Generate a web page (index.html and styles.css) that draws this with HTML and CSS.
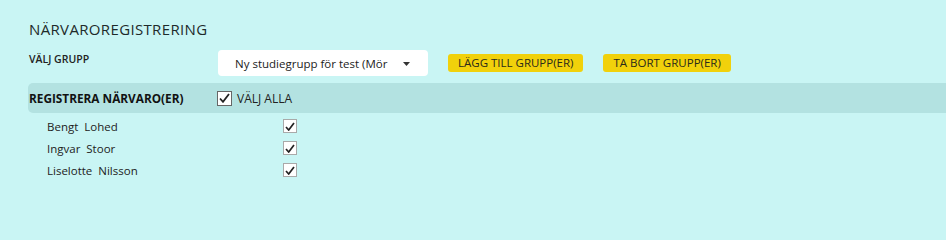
FILE: index.html
```html
<!DOCTYPE html>
<html lang="sv">
<head>
<meta charset="utf-8">
<title>Närvaroregistrering</title>
<link rel="stylesheet" href="styles.css">
</head>
<body>
<div class="page">
  <h1 class="title">NÄRVAROREGISTRERING</h1>
  <div class="group-row">
    <span class="group-label">VÄLJ GRUPP</span>
    <div class="select">
      <span class="select-text">Ny studiegrupp för test (Mör</span>
      <svg class="select-arrow" width="7" height="4" viewBox="0 0 7 4"><path d="M0 0H7L3.5 4Z" fill="#333"/></svg>
    </div>
    <button class="btn">LÄGG TILL GRUPP(ER)</button>
    <button class="btn">TA BORT GRUPP(ER)</button>
  </div>
  <div class="bar">
    <span class="bar-label">REGISTRERA NÄRVARO(ER)</span>
    <span class="check check-all"><svg width="11" height="10" viewBox="0 0 11 10"><path d="M1 5.5L4 8.8L10 1" fill="none" stroke="#222" stroke-width="1.8"/></svg></span>
    <span class="all-label">VÄLJ ALLA</span>
  </div>
  <ul class="list">
    <li class="row"><span class="name">Bengt&nbsp; Lohed</span><span class="check"><svg width="10" height="9" viewBox="0 0 10 9"><path d="M1 5L3.7 8L9 1" fill="none" stroke="#222" stroke-width="1.7"/></svg></span></li>
    <li class="row"><span class="name">Ingvar&nbsp; Stoor</span><span class="check"><svg width="10" height="9" viewBox="0 0 10 9"><path d="M1 5L3.7 8L9 1" fill="none" stroke="#222" stroke-width="1.7"/></svg></span></li>
    <li class="row"><span class="name">Liselotte&nbsp; Nilsson</span><span class="check"><svg width="10" height="9" viewBox="0 0 10 9"><path d="M1 5L3.7 8L9 1" fill="none" stroke="#222" stroke-width="1.7"/></svg></span></li>
  </ul>
</div>
</body>
</html>
```
FILE: styles.css
```css
html, body {
  margin: 0;
  padding: 0;
  background: #c9f5f4;
}
body {
  font-family: "Open Sans", "Noto Sans", sans-serif;
  color: #222;
  width: 946px;
  height: 223px;
  overflow: hidden;
}
.page {
  padding-top: 20px;
}
.title {
  margin: 0 0 0 29px;
  font-size: 15px;
  font-weight: 400;
  line-height: 19px;
  color: #1e2a2a;
  letter-spacing: 0.35px;
}
.group-row {
  display: flex;
  align-items: flex-start;
  margin: 12px 0 0 29px;
}
.group-label {
  width: 189px;
  font-size: 10.5px;
  font-weight: 600;
  line-height: 12px;
  margin-top: 2px;
  color: #222;
}
.select {
  box-sizing: border-box;
  width: 210px;
  height: 26px;
  background: #fff;
  border-radius: 4px;
  display: flex;
  align-items: center;
  padding-left: 17px;
  margin-top: -1px;
}
.select-text {
  font-size: 11.5px;
  color: #222;
  white-space: nowrap;
}
.select-arrow {
  margin-left: auto;
  margin-right: 18px;
  margin-top: 1px;
}
.btn {
  margin: 3px 0 0 20px;
  height: 18px;
  padding: 0 10px;
  border: none;
  border-radius: 3px;
  background: #f1d10b;
  font-family: inherit;
  font-size: 11.5px;
  color: #2a2a1a;
  line-height: 18px;
}
.bar {
  margin: 7px 0 0 28px;
  height: 30px;
  background: #b3e2e1;
  border-radius: 5px 0 0 5px;
  display: flex;
  align-items: center;
}
.bar-label {
  width: 188px;
  padding-left: 1px;
  font-size: 11.8px;
  font-weight: 700;
  color: #111;
}
.check {
  box-sizing: border-box;
  width: 14px;
  height: 14px;
  border: 1px solid #a9a9a9;
  background: #fff;
  display: flex;
  align-items: center;
  justify-content: center;
}
.check-all {
  width: 15px;
  height: 15px;
  border-color: #666;
}
.all-label {
  margin-left: 5px;
  font-size: 12px;
  color: #222;
}
.list {
  list-style: none;
  margin: 2px 0 0 47px;
  padding: 0;
}
.row {
  display: flex;
  align-items: center;
  height: 22px;
}
.name {
  width: 236px;
  font-size: 11.5px;
  color: #222;
}
```
